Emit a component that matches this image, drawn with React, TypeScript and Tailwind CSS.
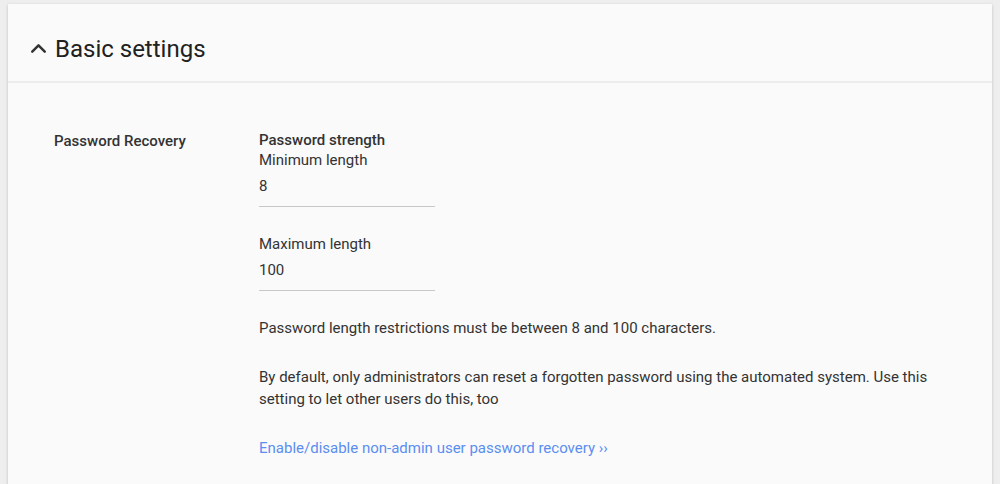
import { ChevronUp } from 'lucide-react';

const font = { fontFamily: 'Roboto, "Noto Sans", Arial, sans-serif' };

function LengthField({ label, value }: { label: string; value: string }) {
  return (
    <div className="w-[176px]">
      <div className="text-[15px] leading-[21px] text-[#333]">{label}</div>
      <div className="pt-[5px] pb-[10px] text-[15px] leading-5 text-[#333] border-b border-[#c8c8c8]">{value}</div>
    </div>
  );
}

export default function App() {
  return (
    <div className="min-h-[484px] bg-[#eeeeee] pt-1 px-2 overflow-hidden" style={font}>
      <div className="bg-[#fafafa] shadow-[0_1px_3px_rgba(0,0,0,0.2)] min-h-[500px]">
        {/* Header */}
        <div className="h-[79px] flex items-center pl-[18px] border-b-2 border-[#ececec]">
          <ChevronUp className="w-[25px] h-[25px] text-[#333] mr-[4px] mt-[11px]" strokeWidth={2.4} />
          <h2 className="text-2xl text-[#212121] mt-[12px] leading-8">Basic settings</h2>
        </div>

        {/* Body */}
        <div className="flex pl-[46px] pr-[46px] pt-[47px]">
          <div className="w-[205px] text-[15px] font-medium leading-5 text-[#333] pt-px">Password Recovery</div>
          <div className="flex-1">
            <div className="text-[15px] font-medium leading-5 text-[#333]">Password strength</div>
            <LengthField label="Minimum length" value="8" />
            <div className="mt-[27px]">
              <LengthField label="Maximum length" value="100" />
            </div>
            <p className="mt-[26px] text-[15px] leading-[22px] text-[#333]">
              Password length restrictions must be between 8 and 100 characters.
            </p>
            <p className="mt-[27px] text-[15px] leading-[22px] text-[#333]">
              By default, only administrators can reset a forgotten password using the automated system. Use this setting to let other users do this, too
            </p>
            <a href="#" className="block mt-[27px] text-[15px] leading-[22px] text-[#5a8ef0]">
              Enable/disable non-admin user password recovery ››
            </a>
          </div>
        </div>
      </div>
    </div>
  );
}
